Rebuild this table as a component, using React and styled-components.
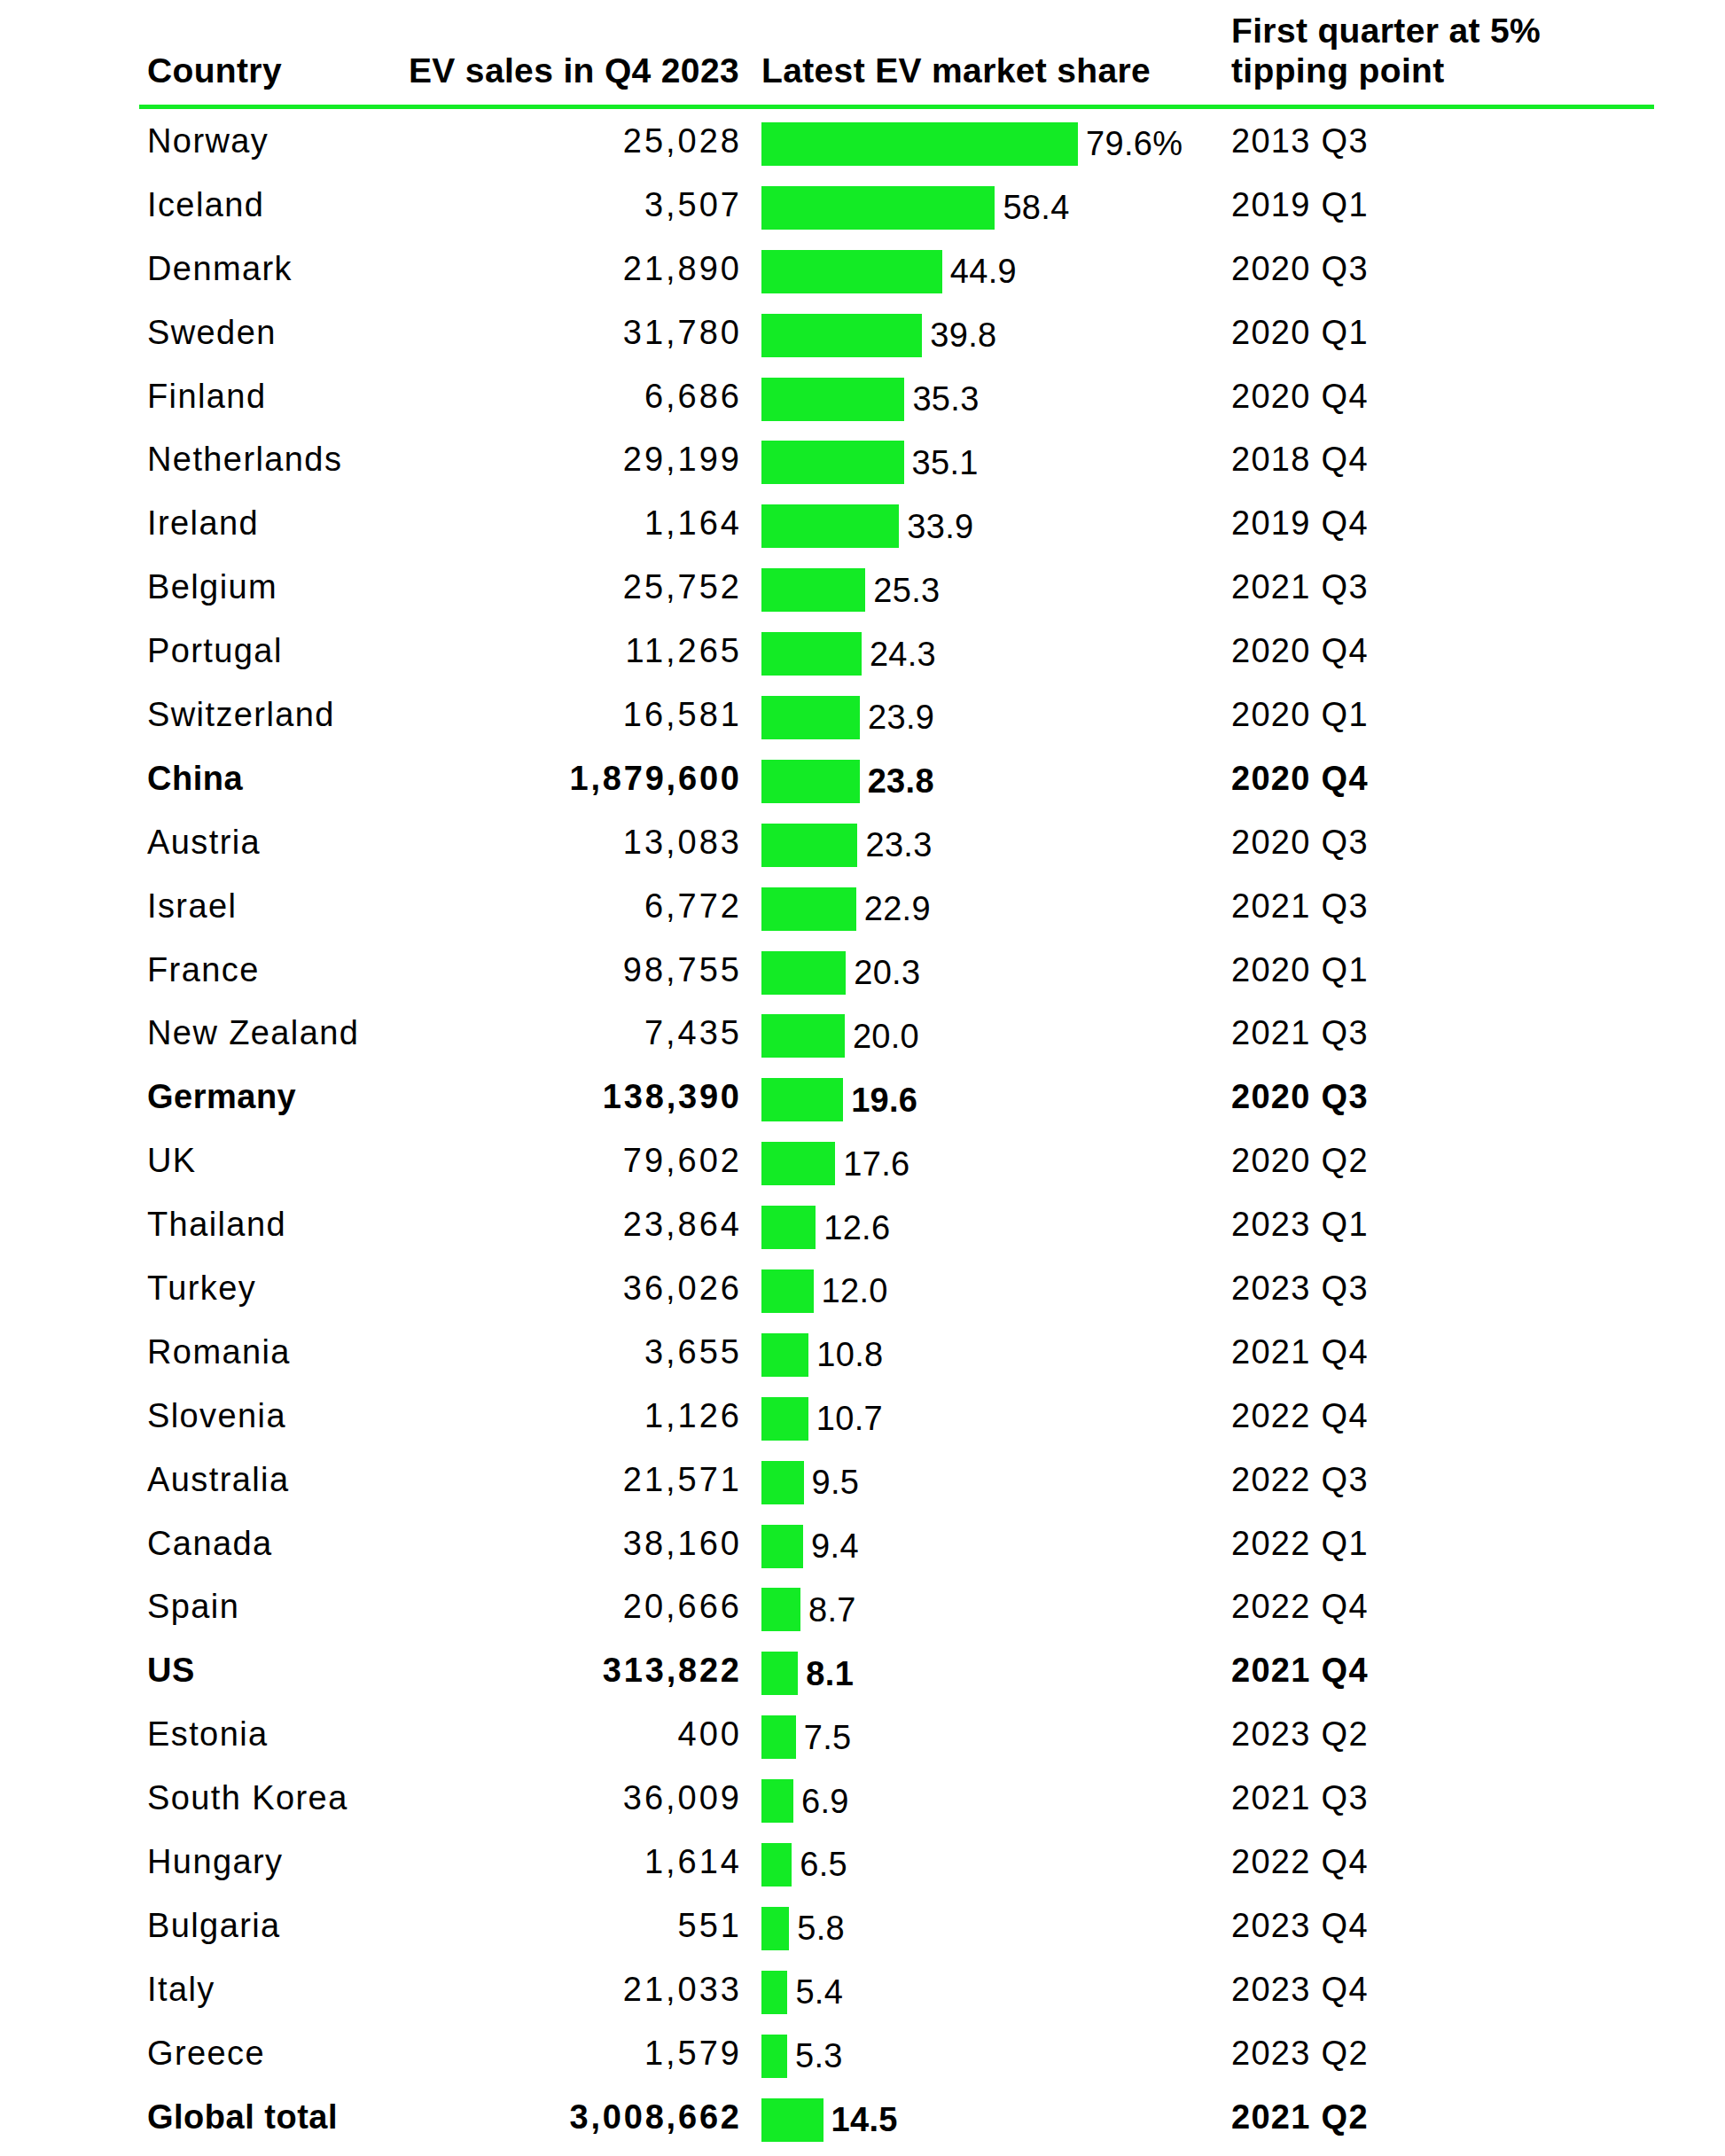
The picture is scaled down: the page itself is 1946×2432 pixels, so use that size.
import React from "react";
import styled, { createGlobalStyle } from "styled-components";

const GlobalStyle = createGlobalStyle`
  html, body {
    margin: 0;
    padding: 0;
    background: #ffffff;
  }
  body {
    font-family: "Liberation Sans", Arial, Helvetica, sans-serif;
    color: #000000;
  }
`;

const GREEN = "#13eb25";

const rows = [
  ["Norway", "25,028", 79.6, "79.6%", "2013 Q3"],
  ["Iceland", "3,507", 58.4, "58.4", "2019 Q1"],
  ["Denmark", "21,890", 44.9, "44.9", "2020 Q3"],
  ["Sweden", "31,780", 39.8, "39.8", "2020 Q1"],
  ["Finland", "6,686", 35.3, "35.3", "2020 Q4"],
  ["Netherlands", "29,199", 35.1, "35.1", "2018 Q4"],
  ["Ireland", "1,164", 33.9, "33.9", "2019 Q4"],
  ["Belgium", "25,752", 25.3, "25.3", "2021 Q3"],
  ["Portugal", "11,265", 24.3, "24.3", "2020 Q4"],
  ["Switzerland", "16,581", 23.9, "23.9", "2020 Q1"],
  ["China", "1,879,600", 23.8, "23.8", "2020 Q4", true],
  ["Austria", "13,083", 23.3, "23.3", "2020 Q3"],
  ["Israel", "6,772", 22.9, "22.9", "2021 Q3"],
  ["France", "98,755", 20.3, "20.3", "2020 Q1"],
  ["New Zealand", "7,435", 20.0, "20.0", "2021 Q3"],
  ["Germany", "138,390", 19.6, "19.6", "2020 Q3", true],
  ["UK", "79,602", 17.6, "17.6", "2020 Q2"],
  ["Thailand", "23,864", 12.6, "12.6", "2023 Q1"],
  ["Turkey", "36,026", 12.0, "12.0", "2023 Q3"],
  ["Romania", "3,655", 10.8, "10.8", "2021 Q4"],
  ["Slovenia", "1,126", 10.7, "10.7", "2022 Q4"],
  ["Australia", "21,571", 9.5, "9.5", "2022 Q3"],
  ["Canada", "38,160", 9.4, "9.4", "2022 Q1"],
  ["Spain", "20,666", 8.7, "8.7", "2022 Q4"],
  ["US", "313,822", 8.1, "8.1", "2021 Q4", true],
  ["Estonia", "400", 7.5, "7.5", "2023 Q2"],
  ["South Korea", "36,009", 6.9, "6.9", "2021 Q3"],
  ["Hungary", "1,614", 6.5, "6.5", "2022 Q4"],
  ["Bulgaria", "551", 5.8, "5.8", "2023 Q4"],
  ["Italy", "21,033", 5.4, "5.4", "2023 Q4"],
  ["Greece", "1,579", 5.3, "5.3", "2023 Q2"],
  ["Global total", "3,008,662", 14.5, "14.5", "2021 Q2", true],
];

const Page = styled.div`
  width: 1946px;
  padding: 12px 0 0 157px;
  box-sizing: border-box;
`;

const Table = styled.div`
  width: 1709px;
`;

const grid = `
  display: grid;
  grid-template-columns: 268px 400px 555px 1fr;
  padding-left: 9px;
`;

const HeaderRow = styled.div`
  ${grid}
  align-items: end;
  padding-bottom: 16px;
  border-bottom: 5px solid ${GREEN};
`;

const HeadCell = styled.div`
  font-weight: 700;
  font-size: 39px;
  line-height: 45px;
  letter-spacing: 0.35px;
  text-align: ${(p) => (p.$right ? "right" : "left")};
  padding-left: ${(p) => (p.$pad ? "25px" : "0")};
  white-space: nowrap;
`;

const Row = styled.div`
  ${grid}
  height: 71.9px;
  align-items: center;
  font-weight: ${(p) => (p.$bold ? 700 : 400)};
  font-size: 38px;
  line-height: 44px;
`;

const Name = styled.div`
  letter-spacing: ${(p) => (p.$bold ? "0.5px" : "1.4px")};
  white-space: nowrap;
`;

const Num = styled.div`
  text-align: right;
  letter-spacing: ${(p) => (p.$bold ? "2.8px" : "3px")};
  margin-right: ${(p) => (p.$bold ? "-2.8px" : "-3px")};
  white-space: nowrap;
`;

const BarCell = styled.div`
  display: flex;
  align-items: center;
  padding: 7px 0 0 25px;
`;

const Bar = styled.div`
  height: 49px;
  background: ${GREEN};
  flex: none;
`;

const Label = styled.span`
  margin-left: 9px;
  letter-spacing: 0.3px;
  white-space: nowrap;
`;

const Quarter = styled.div`
  letter-spacing: 1.3px;
  white-space: nowrap;
`;

const barWidth = (v) => 5.6 + 4.415 * v;

export default function App() {
  return (
    <>
      <GlobalStyle />
      <Page>
        <Table>
          <HeaderRow>
            <HeadCell>Country</HeadCell>
            <HeadCell $right>EV sales in Q4 2023</HeadCell>
            <HeadCell $pad>Latest EV market share</HeadCell>
            <HeadCell>
              First quarter at 5%
              <br />
              tipping point
            </HeadCell>
          </HeaderRow>
          {rows.map(([name, sales, share, label, quarter, bold]) => (
            <Row key={name} $bold={bold}>
              <Name $bold={bold}>{name}</Name>
              <Num $bold={bold}>{sales}</Num>
              <BarCell>
                <Bar style={{ width: `${barWidth(share)}px` }} />
                <Label>{label}</Label>
              </BarCell>
              <Quarter>{quarter}</Quarter>
            </Row>
          ))}
        </Table>
      </Page>
    </>
  );
}
